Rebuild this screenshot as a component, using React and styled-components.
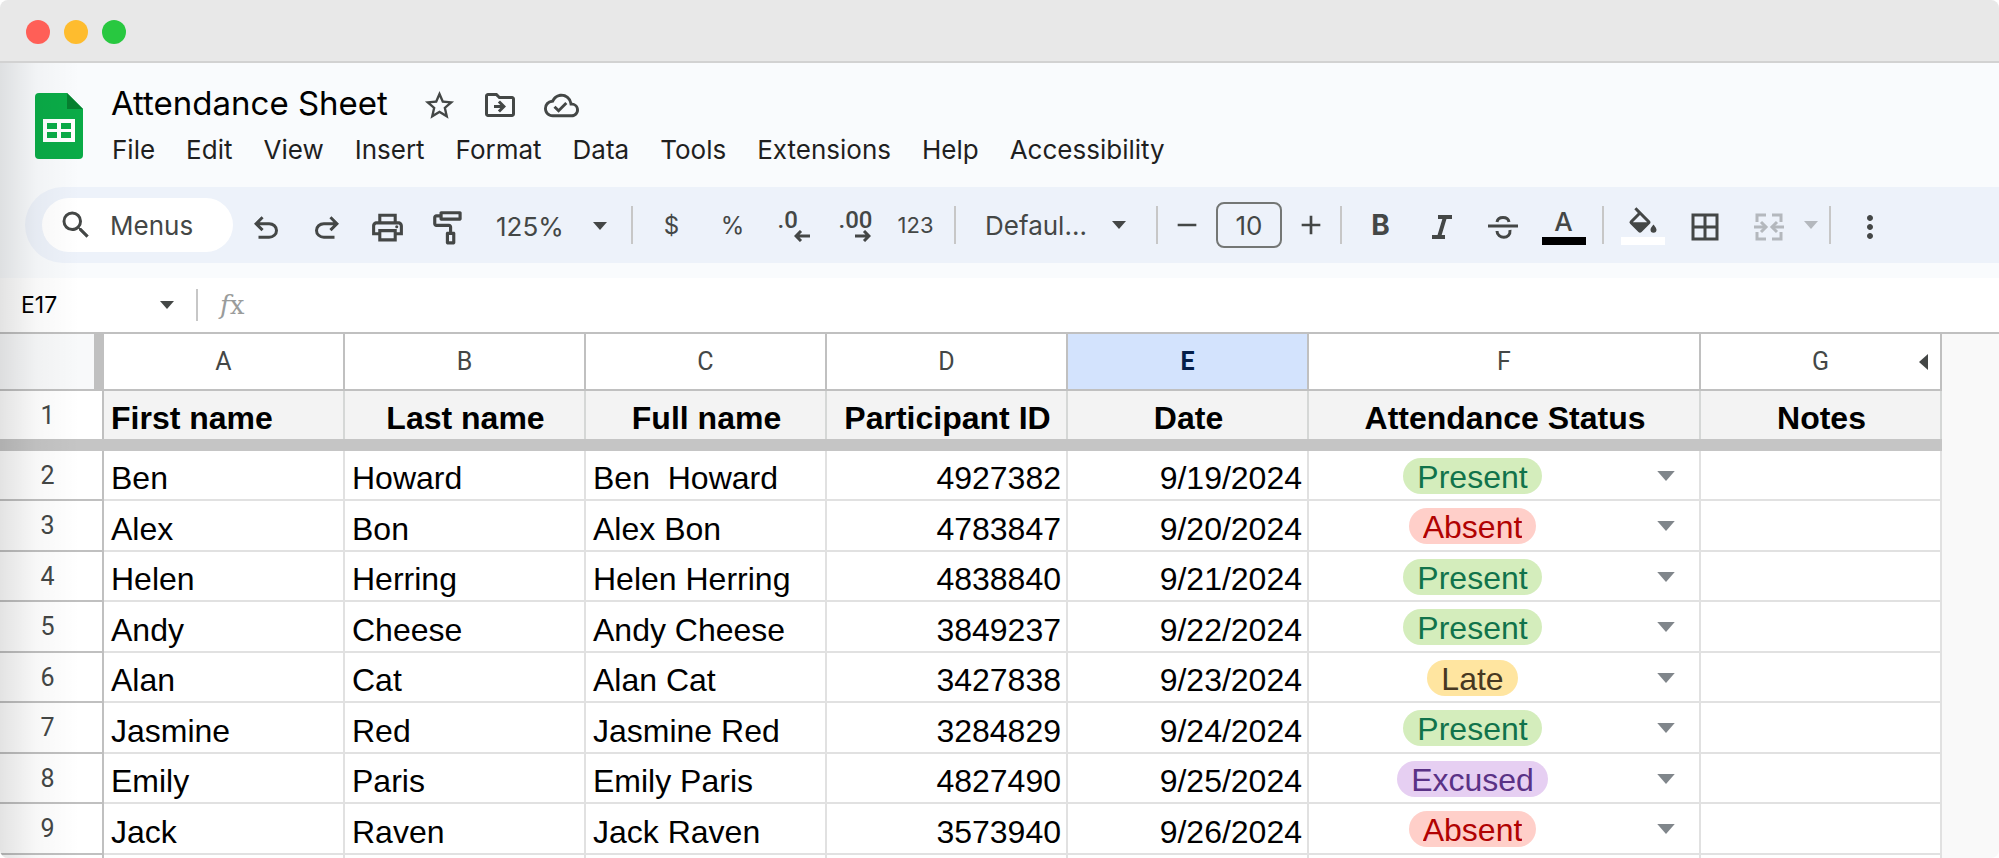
import React from 'react'
import styled, { createGlobalStyle, css } from 'styled-components'
import {
  MdStarBorder,
  MdOutlineDriveFileMove,
  MdOutlineCloudDone,
  MdOutlinePrint,
  MdOutlineImagesearchRoller,
  MdSearch,
  MdBorderAll,
  MdMoreVert,
  MdAdd,
  MdRemove,
} from 'react-icons/md'

const menus = [
  'File',
  'Edit',
  'View',
  'Insert',
  'Format',
  'Data',
  'Tools',
  'Extensions',
  'Help',
  'Accessibility',
]

const statuses = ['Present', 'Absent', 'Late', 'Excused']

const rows = [
  ['Ben', 'Howard', 'Ben  Howard', '4927382', '9/19/2024', 'Present'],
  ['Alex', 'Bon', 'Alex Bon', '4783847', '9/20/2024', 'Absent'],
  ['Helen', 'Herring', 'Helen Herring', '4838840', '9/21/2024', 'Present'],
  ['Andy', 'Cheese', 'Andy Cheese', '3849237', '9/22/2024', 'Present'],
  ['Alan', 'Cat', 'Alan Cat', '3427838', '9/23/2024', 'Late'],
  ['Jasmine', 'Red', 'Jasmine Red', '3284829', '9/24/2024', 'Present'],
  ['Emily', 'Paris', 'Emily Paris', '4827490', '9/25/2024', 'Excused'],
  ['Jack', 'Raven', 'Jack Raven', '3573940', '9/26/2024', 'Absent'],
]

const Caret = ({ width = 14, height = 8 }) => (
  <svg width={width} height={height} viewBox="0 0 14 8" aria-hidden="true">
    <path d="M0 0h14L7 8z" fill="currentColor" />
  </svg>
)

const SheetsLogo = () => (
  <svg width="48" height="66" viewBox="0 0 48 66" aria-hidden="true">
    <path d="M4 0h28l16 16v46a4 4 0 0 1-4 4H4a4 4 0 0 1-4-4V4a4 4 0 0 1 4-4z" fill="#0aab47" />
    <path d="M32 0l16 16H32z" fill="#06802f" />
    <path
      d="M8 26h32v23H8zM12 30v6h10v-6zM26 30v6h10v-6zM12 39v6h10v-6zM26 39v6h10v-6z"
      fill="#fff"
      fillRule="evenodd"
    />
  </svg>
)

const Undo = () => (
  <svg width="36" height="36" viewBox="0 -990 960 960" fill="currentColor" aria-hidden="true">
    <path d="M280-200v-80h284q63 0 109.5-40T720-420q0-60-46.5-100T564-560H312l104 104-56 56-200-200 200-200 56 56-104 104h252q97 0 166.5 63T800-420q0 94-69.5 157T564-200H280Z" />
  </svg>
)

const Redo = () => (
  <svg width="36" height="36" viewBox="0 -990 960 960" fill="currentColor" aria-hidden="true">
    <path d="M396-200q-97 0-166.5-63T160-420q0-94 69.5-157T396-640h252L544-744l56-56 200 200-200 200-56-56 104-104H396q-63 0-109.5 40T240-420q0 60 46.5 100T396-280h284v80H396Z" />
  </svg>
)

const SmallArrow = ({ flip }) => (
  <svg width="16" height="12" viewBox="0 0 16 12" aria-hidden="true">
    <path
      d={flip ? 'M0 6h14M9 1l5 5-5 5' : 'M16 6H2M7 1L2 6l5 5'}
      fill="none"
      stroke="currentColor"
      strokeWidth="3"
    />
  </svg>
)

const Italic = () => (
  <svg width="20" height="24" viewBox="0 0 20 24" aria-hidden="true">
    <path d="M6 2h14M0 22h13M13 2L7 22" stroke="currentColor" strokeWidth="4" />
  </svg>
)

const Strikethrough = () => (
  <svg width="30" height="24" viewBox="0 0 30 24" aria-hidden="true">
    <g fill="none" stroke="currentColor" strokeWidth="3">
      <path d="M0 11h30" />
      <path d="M9 7C10 1 20 1 21 7M9 16c0 8 14 9 13-1" />
    </g>
  </svg>
)

const Bucket = () => (
  <svg width="36" height="26" viewBox="0 0 24 17" fill="currentColor" aria-hidden="true">
    <path d="M16.56 8.94 7.62 0 6.21 1.41l2.38 2.38-5.15 5.15a1.49 1.49 0 0 0 0 2.12l5.5 5.5c.29.29.68.44 1.06.44s.77-.15 1.06-.44l5.5-5.5c.59-.58.59-1.53 0-2.12zM5.21 10 10 5.21 14.79 10H5.21zM19 11.5s-2 2.17-2 3.5a2 2 0 1 0 4 0c0-1.33-2-3.5-2-3.5z" />
  </svg>
)

const Merge = () => (
  <svg width="30" height="28" viewBox="0 0 30 28" aria-hidden="true">
    <g fill="none" stroke="currentColor" strokeWidth="3">
      <path d="M12 2H3v7M18 2h9v7M12 26H3v-7M18 26h9v-7M0 14h11M30 14H19" />
      <path d="M7 9l5 5-5 5M23 9l-5 5 5 5" />
    </g>
  </svg>
)

const App = () => (
  <Window>
    <GlobalStyle />
    <TitleBar>
      <Dot $color="#ff5f57" />
      <Dot $color="#febc2e" />
      <Dot $color="#28c840" />
    </TitleBar>
    <Body>
      <Top>
        <Header>
          <SheetsLogo />
          <div>
            <TitleRow>
              <Title>Attendance Sheet</Title>
              <TitleButton aria-label="Star">
                <MdStarBorder size={35} />
              </TitleButton>
              <TitleButton aria-label="Move">
                <MdOutlineDriveFileMove size={36} />
              </TitleButton>
              <TitleButton aria-label="Saved to Drive">
                <MdOutlineCloudDone size={35} />
              </TitleButton>
            </TitleRow>
            <MenuBar>
              {menus.map(menu => (
                <MenuButton key={menu}>{menu}</MenuButton>
              ))}
            </MenuBar>
          </div>
        </Header>
        <Toolbar>
          <SearchBox>
            <MdSearch size={36} />
            <SearchInput aria-label="Search the menus" placeholder="Menus" />
          </SearchBox>
          <Tool aria-label="Undo">
            <Undo />
          </Tool>
          <Tool aria-label="Redo">
            <Redo />
          </Tool>
          <Tool aria-label="Print">
            <MdOutlinePrint size={37} />
          </Tool>
          <Tool aria-label="Paint format">
            <MdOutlineImagesearchRoller size={38} />
          </Tool>
          <Picker $width={144} $padding="2px 16px 0 17px">
            <PickerSelect aria-label="Zoom">
              <option>125%</option>
            </PickerSelect>
            <Caret />
          </Picker>
          <Divider />
          <Tool $size={24}>$</Tool>
          <Tool $size={24}>%</Tool>
          <Tool aria-label="Decrease decimal places">
            <Decimal>
              .0
              <SmallArrow />
            </Decimal>
          </Tool>
          <Tool aria-label="Increase decimal places">
            <Decimal>
              .00
              <SmallArrow flip />
            </Decimal>
          </Tool>
          <Tool $size={22}>123</Tool>
          <Divider />
          <Picker $width={184} $padding="0 22px 0 21px">
            <PickerSelect aria-label="Font">
              <option>Defaul...</option>
            </PickerSelect>
            <Caret />
          </Picker>
          <Divider />
          <Stepper $width={42} aria-label="Decrease font size">
            <MdRemove size={32} />
          </Stepper>
          <SizeInput aria-label="Font size" defaultValue="10" />
          <Stepper $width={42} aria-label="Increase font size">
            <MdAdd size={32} />
          </Stepper>
          <Divider />
          <Tool $size={28} aria-label="Bold">
            <b>B</b>
          </Tool>
          <Tool aria-label="Italic">
            <Italic />
          </Tool>
          <Tool aria-label="Strikethrough">
            <Strikethrough />
          </Tool>
          <Tool aria-label="Text color">
            <Swatch $color="#000">A</Swatch>
          </Tool>
          <Divider />
          <Tool aria-label="Fill color">
            <Swatch $color="#fff">
              <Bucket />
            </Swatch>
          </Tool>
          <Tool $width={64} aria-label="Borders">
            <MdBorderAll size={36} />
          </Tool>
          <Tool $width={64} aria-label="Merge cells" disabled>
            <Merge />
          </Tool>
          <Stepper $width={20} aria-label="Merge type" disabled>
            <Caret />
          </Stepper>
          <Divider />
          <Tool aria-label="More">
            <MdMoreVert size={36} />
          </Tool>
        </Toolbar>
      </Top>
      <FormulaBar>
        <NameBox aria-label="Name box" defaultValue="E17" />
        <Caret />
        <Divider $gap={22} $height={32} />
        <Fx>
          <i>f</i>x
        </Fx>
      </FormulaBar>
      <Grid>
        <Table>
          <colgroup>
            <Col $width={104} />
            <Col $width={241} />
            <Col $width={241} />
            <Col $width={241} />
            <Col $width={241} />
            <Col $width={241} />
            <Col $width={392} />
            <Col $width={241} />
          </colgroup>
          <thead>
            <tr>
              <Corner />
              <ColumnHead>A</ColumnHead>
              <ColumnHead>B</ColumnHead>
              <ColumnHead>C</ColumnHead>
              <ColumnHead>D</ColumnHead>
              <ColumnHead $selected>E</ColumnHead>
              <ColumnHead>F</ColumnHead>
              <ColumnHead>
                G
                <HiddenColumns width="9" height="16" viewBox="0 0 9 16" aria-hidden="true">
                  <path d="M9 0v16L0 8z" fill="currentColor" />
                </HiddenColumns>
              </ColumnHead>
            </tr>
            <TitleCells>
              <RowHead $frozen>1</RowHead>
              <TitleCell $align="left">First name</TitleCell>
              <TitleCell>Last name</TitleCell>
              <TitleCell>Full name</TitleCell>
              <TitleCell>Participant ID</TitleCell>
              <TitleCell>Date</TitleCell>
              <TitleCell>Attendance Status</TitleCell>
              <TitleCell>Notes</TitleCell>
            </TitleCells>
            <tr>
              <Freeze colSpan={8} />
            </tr>
          </thead>
          <tbody>
            {rows.map(([first, last, full, id, date, status], i) => (
              <Row key={id}>
                <RowHead>{i + 2}</RowHead>
                <Cell>{first}</Cell>
                <Cell>{last}</Cell>
                <Cell>{full}</Cell>
                <Cell $align="right">{id}</Cell>
                <Cell $align="right">{date}</Cell>
                <StatusCell>
                  <Status>
                    <Chip aria-label={`Status of ${full}`} defaultValue={status} $status={status}>
                      {statuses.map(name => (
                        <option key={name}>{name}</option>
                      ))}
                    </Chip>
                    <Caret width={18} height={10} />
                  </Status>
                </StatusCell>
                <Cell />
              </Row>
            ))}
            <Row>
              <RowHead />
              <Cell />
              <Cell />
              <Cell />
              <Cell />
              <Cell />
              <Cell />
              <Cell />
            </Row>
          </tbody>
        </Table>
      </Grid>
    </Body>
  </Window>
)

export default App

const GlobalStyle = createGlobalStyle`
  * {
    box-sizing: border-box;
  }
  body {
    margin: 0;
    background: #fff;
    overflow: hidden;
  }
  button,
  input,
  select {
    appearance: none;
    margin: 0;
    padding: 0;
    border: 0;
    border-radius: 0;
    background: none;
    color: inherit;
    font: inherit;
  }
  svg {
    display: block;
    flex: none;
  }
`
const Window = styled.div`
  display: flex;
  flex-direction: column;
  height: 100vh;
  overflow: hidden;
  border-radius: 8px;
  font-family: Inter, sans-serif;
  color: #444746;
`
const TitleBar = styled.div`
  display: flex;
  flex: none;
  align-items: center;
  gap: 14px;
  height: 63px;
  padding: 2px 0 0 26px;
  border-bottom: 2px solid #d2d2d2;
  background: #e8e8e8;
`
const Dot = styled.span`
  width: 24px;
  height: 24px;
  border-radius: 50%;
  background: ${props => props.$color};
`
const Body = styled.main`
  position: relative;
  display: flex;
  flex: 1;
  flex-direction: column;
  min-height: 0;
  background: #fff;
  &::after {
    content: '';
    position: absolute;
    inset: 0 auto 0 0;
    width: 80px;
    background: linear-gradient(to right, rgba(0, 0, 0, 0.11), rgba(0, 0, 0, 0.03) 45%, transparent);
    pointer-events: none;
  }
`
const Top = styled.div`
  flex: none;
  padding-bottom: 15px;
  background: #f9fbfd;
`
const Header = styled.header`
  display: flex;
  align-items: flex-start;
  gap: 28px;
  height: 124px;
  padding: 30px 0 0 35px;
`
const TitleRow = styled.div`
  display: flex;
  align-items: center;
  height: 40px;
  margin-top: -10px;
`
const Title = styled.h1`
  margin: 0 21px 0 0;
  color: #000;
  font-size: 33px;
  line-height: 40px;
  font-weight: 400;
`
const TitleButton = styled.button`
  display: flex;
  align-items: flex-end;
  justify-content: center;
  width: 61px;
  height: 40px;
`
const MenuBar = styled.nav`
  display: flex;
  gap: 31px;
  padding-left: 1px;
`
const MenuButton = styled.button`
  color: #1f1f1f;
  font-size: 26px;
  line-height: 54px;
`
const Toolbar = styled.div`
  display: flex;
  align-items: center;
  height: 76px;
  margin-left: 25px;
  padding-left: 17px;
  overflow: hidden;
  border-radius: 38px 0 0 38px;
  background: #edf2fa;
`
const SearchBox = styled.label`
  display: flex;
  flex: none;
  align-items: center;
  gap: 16px;
  width: 191px;
  height: 54px;
  margin-right: 2px;
  padding-left: 16px;
  border-radius: 27px;
  background: #fff;
`
const SearchInput = styled.input`
  width: 110px;
  font-size: 26px;
  &::placeholder {
    color: #444746;
    opacity: 1;
  }
`
const Tool = styled.button`
  display: flex;
  flex: none;
  align-items: center;
  justify-content: center;
  width: ${props => props.$width || 61}px;
  height: 48px;
  font-size: ${props => props.$size || 26}px;
  &:disabled {
    color: #b4b8bd;
  }
  & > svg {
    margin-top: 4px;
  }
`
const Stepper = styled(Tool)`
  & > svg {
    margin-top: 0;
  }
`
const Picker = styled.div`
  display: flex;
  flex: none;
  align-items: center;
  width: ${props => props.$width}px;
  padding: ${props => props.$padding};
`
const PickerSelect = styled.select`
  flex: 1;
  min-width: 0;
  font-size: 26px;
`
const Divider = styled.span`
  flex: none;
  width: 2px;
  height: ${props => props.$height || 38}px;
  margin: 0 ${props => props.$gap || 8}px;
  background: #c7c7c7;
`
const Decimal = styled.span`
  display: flex;
  flex-direction: column;
  width: 32px;
  padding-top: 2px;
  font: 500 24px Roboto, sans-serif;
  line-height: 20px;
  text-align: left;
  & > svg {
    align-self: flex-end;
  }
`
const SizeInput = styled.input`
  flex: none;
  width: 66px;
  height: 46px;
  margin: 0 8px;
  border: 2px solid #747775;
  border-radius: 8px;
  font-size: 26px;
  text-align: center;
`
const Swatch = styled.span`
  display: flex;
  flex-direction: column;
  align-items: center;
  justify-content: flex-end;
  width: 44px;
  height: 40px;
  border-bottom: 8px solid ${props => props.$color};
  font-weight: 500;
  line-height: 30px;
  & > svg {
    margin-bottom: 4px;
  }
`
const FormulaBar = styled.div`
  display: flex;
  flex: none;
  align-items: center;
  height: 56px;
  padding-left: 21px;
  border-bottom: 2px solid #c0c0c0;
`
const NameBox = styled.input`
  width: 139px;
  color: #000;
  font-size: 23px;
`
const Fx = styled.span`
  color: #9a9c9b;
  font: 26px 'DejaVu Serif', serif;
`
const Grid = styled.div`
  flex: 1;
  min-height: 0;
  overflow: hidden;
  background: #f9f9f9;
`
const Table = styled.table`
  width: 1942px;
  table-layout: fixed;
  border-collapse: separate;
  border-spacing: 0;
  background: #fff;
`
const Col = styled.col`
  width: ${props => props.$width}px;
`
const headBorder = css`
  border: 0 solid #c0c0c0;
  border-width: 0 2px 2px 0;
  font-size: 25px;
  font-weight: 400;
  font-family: Roboto, sans-serif;
`
const Corner = styled.td`
  ${headBorder};
  border-right-width: 10px;
  background: #f8f9fa;
`
const ColumnHead = styled.th`
  ${headBorder};
  position: relative;
  height: 57px;
  padding: 0;
  background: ${props => (props.$selected ? '#d3e3fd' : '#fff')};
  ${props =>
    props.$selected &&
    css`
      color: #041e49;
      font-weight: 700;
    `};
`
const HiddenColumns = styled.svg`
  position: absolute;
  top: 20px;
  right: 12px;
`
const RowHead = styled.th`
  ${headBorder};
  border-bottom-width: ${props => (props.$frozen ? 0 : 2)}px;
  padding: 0 7px 0 0;
`
const TitleCells = styled.tr`
  height: 48px;
`
// alternate 50 and 51 so that ten rows come to 505px
const Row = styled.tr`
  height: 50px;
  &:nth-child(even) {
    height: 51px;
  }
`
const Cell = styled.td`
  padding: 0 5px 3px 7px;
  border: 0 solid #e1e1e1;
  border-width: 0 2px 2px 0;
  color: #000;
  font: 32px 'Liberation Sans', Arial, sans-serif;
  line-height: 36px;
  text-align: ${props => props.$align || 'left'};
  vertical-align: bottom;
  white-space: pre;
`
const TitleCell = styled(Cell)`
  background: #f3f3f3;
  font-weight: 700;
  border-color: #d5d7d6;
  border-bottom: 0;
  text-align: ${props => props.$align || 'center'};
`
const Freeze = styled.td`
  height: 12px;
  padding: 0;
  background: #c5c5c5;
`
const StatusCell = styled(Cell)`
  padding: 0;
  vertical-align: middle;
`
const Status = styled.div`
  display: grid;
  grid-template-columns: 1fr 60px;
  align-items: center;
  justify-items: center;
  padding: 1px 3px 0 0;
  color: #80868b;
`
const chipColors = {
  Present: ['#d4edbc', '#11734b'],
  Absent: ['#ffcfc9', '#b10202'],
  Late: ['#ffe5a0', '#473821'],
  Excused: ['#e6cff2', '#5a3286'],
}
const Chip = styled.select`
  field-sizing: content;
  height: 36px;
  padding: 2px 14px 0;
  border-radius: 18px;
  background: ${props => chipColors[props.$status][0]};
  color: ${props => chipColors[props.$status][1]};
  line-height: 34px;
`
